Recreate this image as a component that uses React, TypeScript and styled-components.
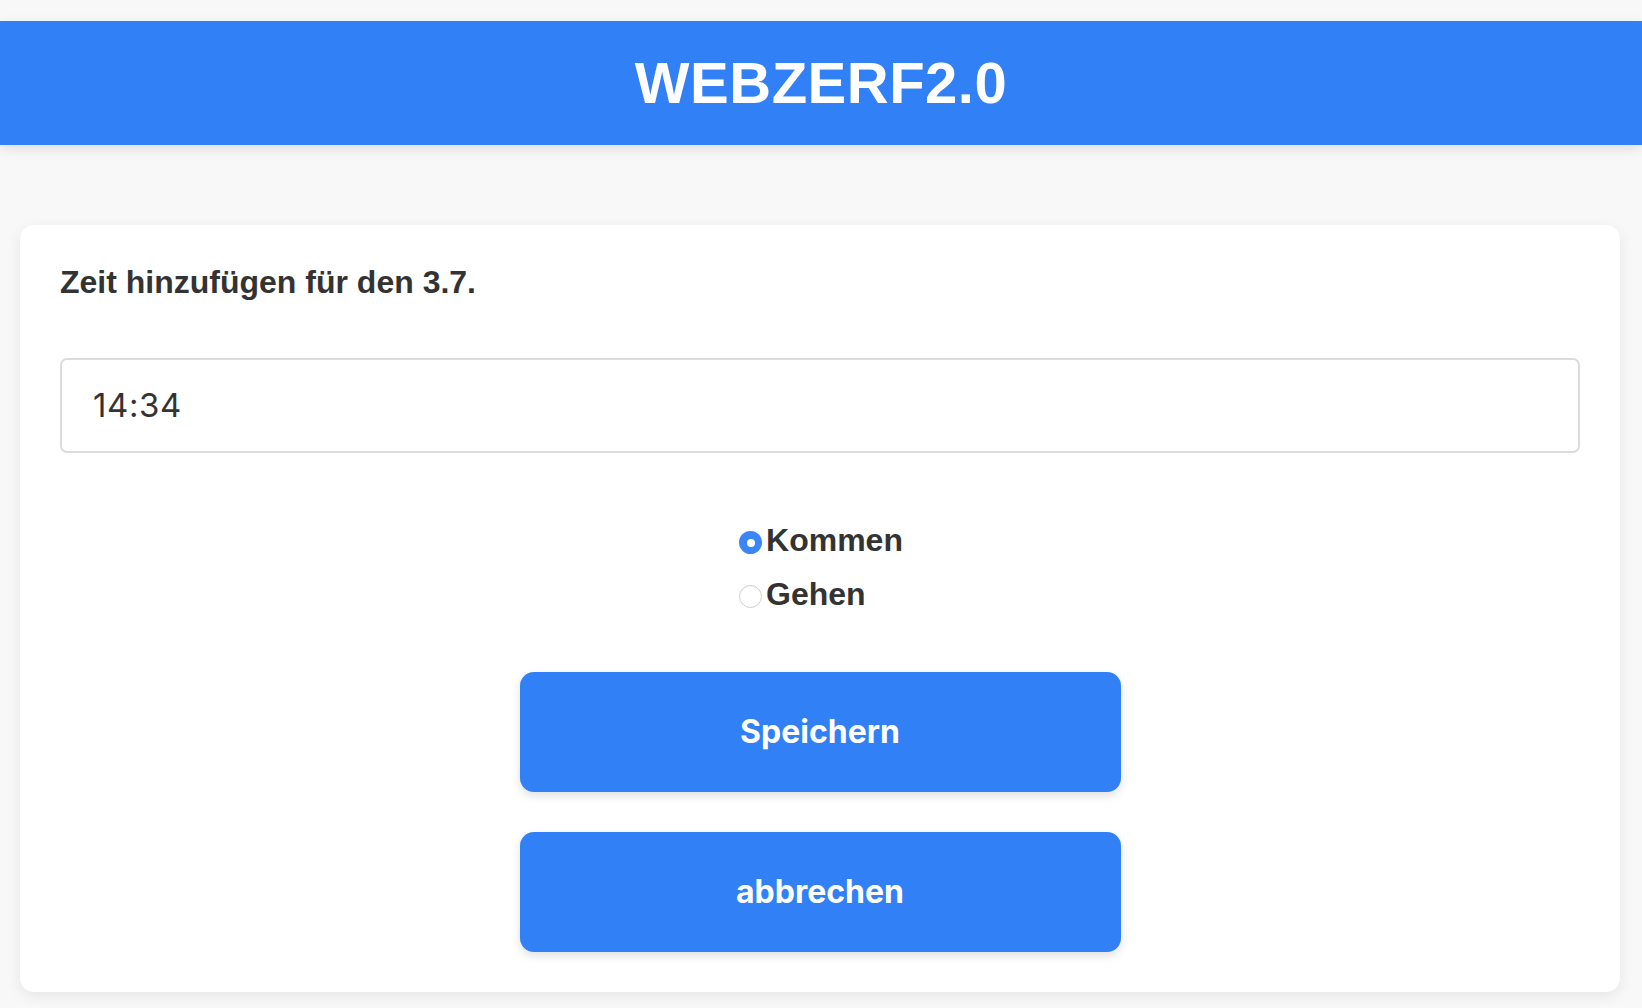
import React, { useState } from "react";
import styled, { createGlobalStyle } from "styled-components";

const GlobalStyle = createGlobalStyle`
  html, body {
    margin: 0;
    padding: 0;
    background: #f8f8f8;
    font-family: "Liberation Sans", Arial, sans-serif;
    color: #333333;
  }
  * { box-sizing: border-box; }
`;

const Page = styled.div`
  padding-top: 21px;
  display: flex;
  flex-direction: column;
`;

const Header = styled.header`
  height: 124px;
  background: #3180f5;
  display: flex;
  align-items: center;
  justify-content: center;
  box-shadow: 0 4px 12px rgba(0, 0, 0, 0.1);
`;

const Brand = styled.h1`
  margin: 0;
  color: #ffffff;
  font-family: "Liberation Sans", Arial, sans-serif;
  font-weight: 700;
  font-size: 58px;
  letter-spacing: 0.5px;
  line-height: 1;
`;

const Card = styled.main`
  margin: 80px 22px 17px 20px;
  background: #ffffff;
  border-radius: 14px;
  padding: 40px;
  box-shadow: 0 4px 14px rgba(0, 0, 0, 0.08);
  display: flex;
  flex-direction: column;
`;

const Title = styled.h2`
  margin: 0;
  font-size: 32px;
  font-weight: 700;
  line-height: 34.5px;
  color: #333333;
`;

const TimeInput = styled.input`
  margin-top: 58px;
  height: 95px;
  width: 100%;
  border: 2px solid #dcdcdc;
  border-radius: 7px;
  padding: 0 31px;
  font-family: "Inter", "Liberation Sans", sans-serif;
  font-size: 33px;
  letter-spacing: 0.6px;
  color: #333333;
  background: #ffffff;
  outline: none;
`;

const RadioGroup = styled.div`
  margin-top: 61px;
  align-self: center;
  display: flex;
  flex-direction: column;
  margin-left: 2px;
`;

const RadioLabel = styled.label`
  display: flex;
  align-items: center;
  height: 54px;
  font-size: 32px;
  font-weight: 700;
  color: #333333;
  cursor: pointer;
`;

const RadioDot = styled.span<{ $checked: boolean }>`
  width: 23px;
  height: 23px;
  border-radius: 50%;
  margin-right: 4px;
  margin-top: 4px;
  flex-shrink: 0;
  display: flex;
  align-items: center;
  justify-content: center;
  background: ${(p) => (p.$checked ? "#3a86f7" : "#ffffff")};
  border: ${(p) => (p.$checked ? "none" : "1px solid #cfcfcf")};
  box-shadow: ${(p) => (p.$checked ? "none" : "inset 0 1px 1px rgba(0,0,0,0.04)")};
  &::after {
    content: "";
    display: ${(p) => (p.$checked ? "block" : "none")};
    width: 8px;
    height: 8px;
    border-radius: 50%;
    background: #ffffff;
  }
`;

const HiddenRadio = styled.input`
  position: absolute;
  opacity: 0;
  width: 0;
  height: 0;
`;

const Buttons = styled.div`
  margin-top: 50px;
  display: flex;
  flex-direction: column;
  align-items: center;
  gap: 40px;
`;

const ActionButton = styled.button`
  width: 601px;
  height: 120px;
  border: none;
  border-radius: 14px;
  background: #3180f5;
  color: #ffffff;
  font-family: "Inter", "Liberation Sans", sans-serif;
  font-size: 32px;
  font-weight: 700;
  box-shadow: 0 4px 10px rgba(0, 0, 0, 0.12);
  cursor: pointer;
`;

export default function App() {
  const [kind, setKind] = useState<"kommen" | "gehen">("kommen");
  const [time, setTime] = useState("14:34");
  return (
    <>
      <GlobalStyle />
      <Page>
        <Header>
          <Brand>WEBZERF2.0</Brand>
        </Header>
        <Card>
          <Title>Zeit hinzufügen für den 3.7.</Title>
          <TimeInput value={time} onChange={(e) => setTime(e.target.value)} />
          <RadioGroup>
            <RadioLabel>
              <HiddenRadio
                type="radio"
                name="kind"
                checked={kind === "kommen"}
                onChange={() => setKind("kommen")}
              />
              <RadioDot $checked={kind === "kommen"} />
              Kommen
            </RadioLabel>
            <RadioLabel>
              <HiddenRadio
                type="radio"
                name="kind"
                checked={kind === "gehen"}
                onChange={() => setKind("gehen")}
              />
              <RadioDot $checked={kind === "gehen"} />
              Gehen
            </RadioLabel>
          </RadioGroup>
          <Buttons>
            <ActionButton>Speichern</ActionButton>
            <ActionButton>abbrechen</ActionButton>
          </Buttons>
        </Card>
      </Page>
    </>
  );
}
